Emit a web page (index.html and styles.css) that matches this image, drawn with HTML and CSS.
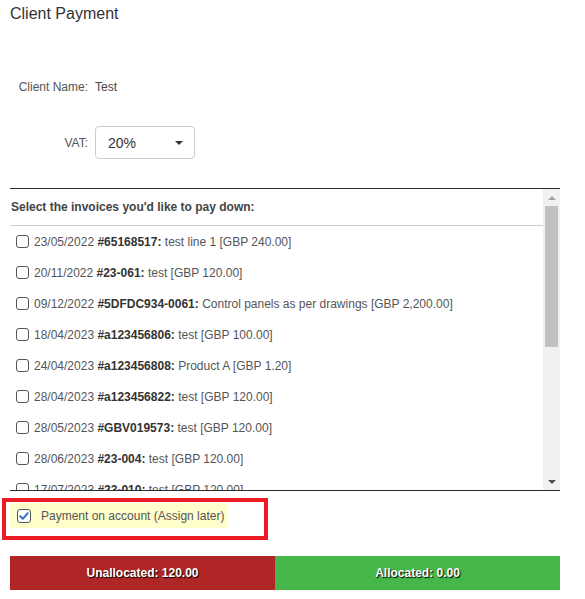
FILE: index.html
```html
<!DOCTYPE html>
<html>
<head>
<meta charset="utf-8">
<link rel="stylesheet" href="styles.css">
</head>
<body>
<div class="page">
  <h1 class="title">Client Payment</h1>

  <div class="field field-client">
    <span class="field-label">Client Name:</span>
    <span class="field-value">Test</span>
  </div>

  <div class="field field-vat">
    <span class="field-label">VAT:</span>
    <div class="select">
      <span class="select-text">20%</span>
      <span class="caret"></span>
    </div>
  </div>

  <div class="invoice-box">
    <div class="invoice-scroll">
      <div class="invoice-header">Select the invoices you'd like to pay down:</div>
      <div class="invoice-row"><span class="cb"></span><span class="row-text">23/05/2022 <b>#65168517:</b> test line 1 [GBP 240.00]</span></div>
      <div class="invoice-row"><span class="cb"></span><span class="row-text">20/11/2022 <b>#23-061:</b> test [GBP 120.00]</span></div>
      <div class="invoice-row"><span class="cb"></span><span class="row-text">09/12/2022 <b>#5DFDC934-0061:</b> Control panels as per drawings [GBP 2,200.00]</span></div>
      <div class="invoice-row"><span class="cb"></span><span class="row-text">18/04/2023 <b>#a123456806:</b> test [GBP 100.00]</span></div>
      <div class="invoice-row"><span class="cb"></span><span class="row-text">24/04/2023 <b>#a123456808:</b> Product A [GBP 1.20]</span></div>
      <div class="invoice-row"><span class="cb"></span><span class="row-text">28/04/2023 <b>#a123456822:</b> test [GBP 120.00]</span></div>
      <div class="invoice-row"><span class="cb"></span><span class="row-text">28/05/2023 <b>#GBV019573:</b> test [GBP 120.00]</span></div>
      <div class="invoice-row"><span class="cb"></span><span class="row-text">28/06/2023 <b>#23-004:</b> test [GBP 120.00]</span></div>
      <div class="invoice-row"><span class="cb"></span><span class="row-text">17/07/2023 <b>#23-010:</b> test [GBP 120.00]</span></div>
    </div>
    <div class="scrollbar">
      <div class="sb-btn"><span class="sb-up"></span></div>
      <div class="sb-track"><div class="sb-thumb"></div></div>
      <div class="sb-btn"><span class="sb-down"></span></div>
    </div>
  </div>

  <div class="account-highlight">
    <label class="account">
      <span class="cb cb-checked">
        <svg viewBox="0 0 12 12" width="12" height="12"><path d="M2.2 6.3 L4.8 8.8 L9.8 3.2" fill="none" stroke="#2f6fc4" stroke-width="2" stroke-linecap="round" stroke-linejoin="round"/></svg>
      </span>
      <span class="account-text">Payment on account (Assign later)</span>
    </label>
  </div>

  <div class="totals">
    <div class="total total-unallocated">Unallocated: 120.00</div>
    <div class="total total-allocated">Allocated: 0.00</div>
  </div>
</div>
</body>
</html>
```

FILE: styles.css
```css
html, body {
  margin: 0;
  padding: 0;
  background: #fff;
}

body {
  font-family: "Liberation Sans", Arial, sans-serif;
  font-size: 12px;
  color: #555;
}

.page {
  width: 550px;
  padding: 5px 25px 0 10px;
}

.title {
  margin: 0;
  font-size: 16px;
  font-weight: normal;
  line-height: 18px;
  color: #333;
}

.field {
  display: flex;
  align-items: center;
}

.field-label {
  width: 78px;
  padding-right: 7px;
  text-align: right;
  color: #555;
}

.field-value {
  color: #444;
}

.field-client {
  height: 34px;
  margin-top: 47px;
}

.field-vat {
  height: 33px;
  margin-top: 22px;
}

.select {
  box-sizing: border-box;
  width: 100px;
  height: 33px;
  border: 1px solid #ccc;
  border-radius: 4px;
  display: flex;
  align-items: center;
  justify-content: space-between;
  padding: 0 11px 0 12px;
  font-size: 14px;
  color: #333;
}

.caret {
  width: 0;
  height: 0;
  border-left: 4px solid transparent;
  border-right: 4px solid transparent;
  border-top: 4px solid #333;
}

.invoice-box {
  margin-top: 29px;
  height: 301px;
  border-top: 1px solid #2b2b2b;
  border-bottom: 1px solid #2b2b2b;
  display: flex;
}

.invoice-scroll {
  flex: 1;
  overflow: hidden;
}

.invoice-header {
  box-sizing: border-box;
  height: 37px;
  border-bottom: 1px solid #ccc;
  padding-left: 1px;
  display: flex;
  align-items: center;
  font-weight: bold;
  color: #444;
}

.invoice-row {
  height: 31px;
  display: flex;
  align-items: center;
  padding-left: 6px;
  white-space: nowrap;
}

.cb {
  box-sizing: border-box;
  flex: none;
  width: 13px;
  height: 13px;
  border: 1px solid #555;
  border-radius: 3px;
  background: #fff;
  margin-right: 5px;
}

.row-text {
  color: #555;
}

.row-text b {
  color: #333;
}

.scrollbar {
  width: 17px;
  flex: none;
  background: #f1f1f1;
  display: flex;
  flex-direction: column;
}

.sb-btn {
  height: 17px;
  display: flex;
  align-items: center;
  justify-content: center;
}

.sb-up {
  width: 0;
  height: 0;
  border-left: 4px solid transparent;
  border-right: 4px solid transparent;
  border-bottom: 4px solid #a3a3a3;
}

.sb-down {
  width: 0;
  height: 0;
  border-left: 4px solid transparent;
  border-right: 4px solid transparent;
  border-top: 4px solid #505050;
}

.sb-track {
  flex: 1;
  padding: 0 2px;
}

.sb-thumb {
  height: 141px;
  background: #c1c1c1;
}

.account-highlight {
  margin-top: 7px;
  margin-left: -8px;
  width: 254px;
  border: 4px solid #ed1c24;
  padding: 1px 0 8px 4px;
}

.account {
  display: inline-flex;
  align-items: center;
  height: 25px;
  padding: 0 3px 0 7px;
  background: #ffffcc;
}

.cb-checked {
  width: 14px;
  height: 14px;
  margin-right: 10px;
  border-color: #555;
  display: flex;
  align-items: center;
  justify-content: center;
}

.cb-checked svg {
  display: block;
}

.account-text {
  color: #555;
}

.totals {
  margin-top: 16px;
  display: flex;
  height: 34px;
}

.total {
  display: flex;
  align-items: center;
  justify-content: center;
  font-weight: bold;
  color: #fff;
  text-shadow: 1px 1px 1px #000;
}

.total-unallocated {
  width: 265px;
  background: #b02525;
}

.total-allocated {
  flex: 1;
  background: #45b649;
}
```
